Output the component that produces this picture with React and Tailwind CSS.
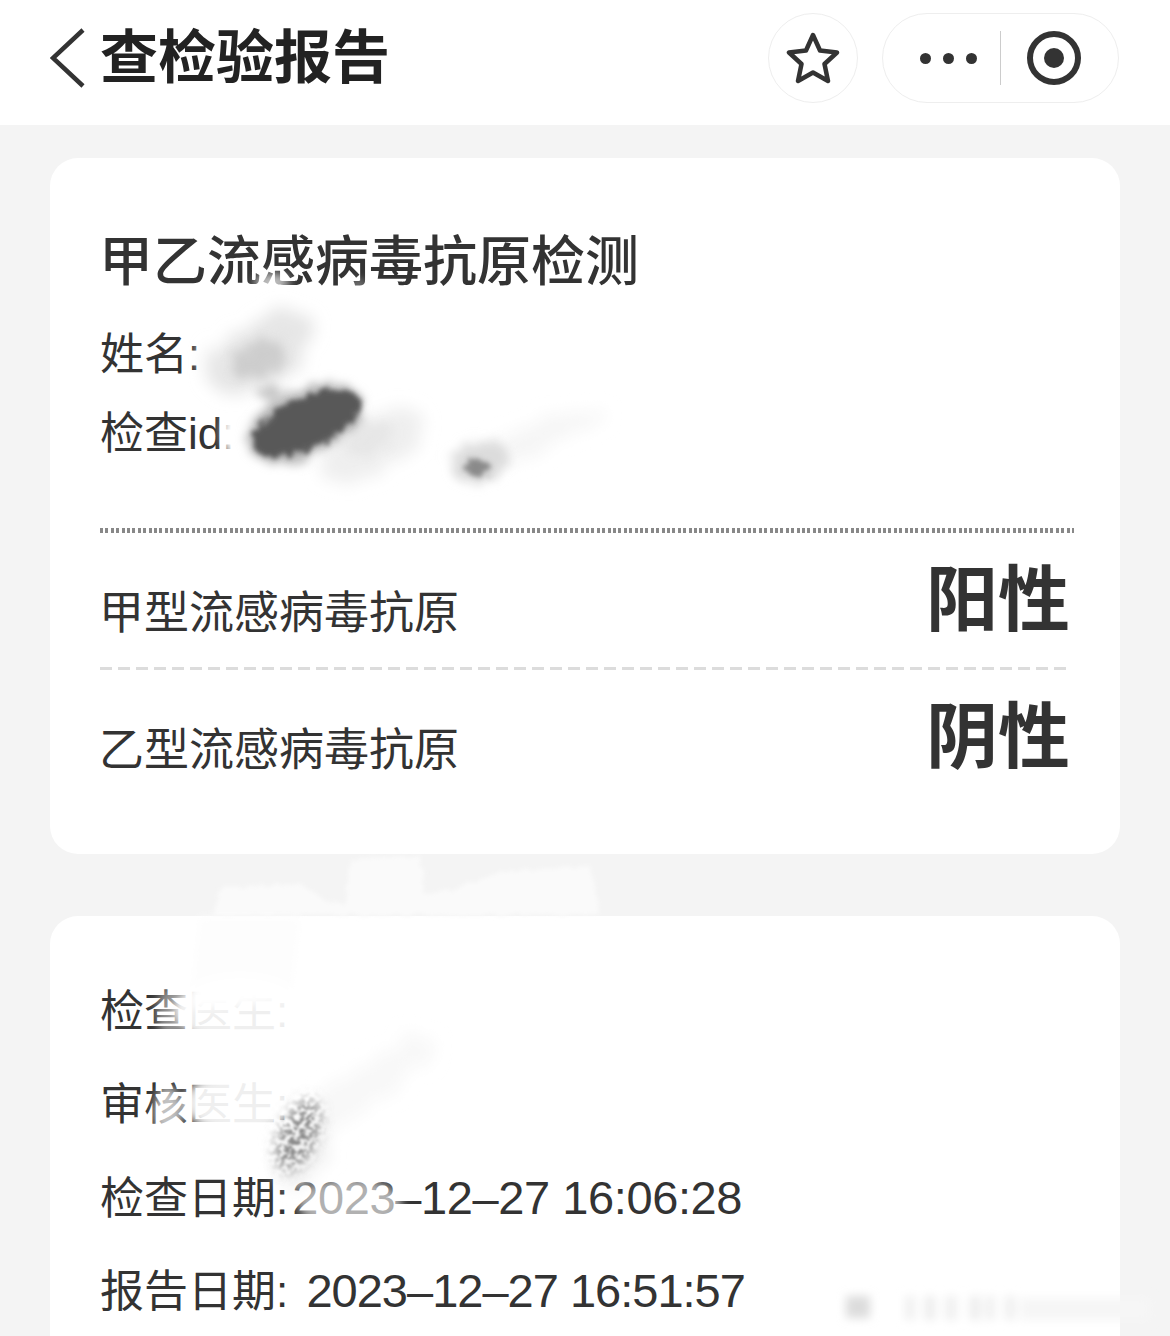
const cjk = "font-['Liberation_Sans','Noto_Sans_CJK_SC',sans-serif]";

function Smudges() {
  return (
    <svg className="absolute left-0 top-0 pointer-events-none" width="1170" height="1336" viewBox="0 0 1170 1336">
      <defs>
        <filter id="rough" x="-40%" y="-40%" width="180%" height="180%">
          <feTurbulence type="fractalNoise" baseFrequency="0.16" numOctaves="3" seed="4" />
          <feDisplacementMap in="SourceGraphic" scale="14" />
          <feGaussianBlur stdDeviation="2.600" />
        </filter>
        <filter id="halo" x="-60%" y="-60%" width="220%" height="220%">
          <feTurbulence type="fractalNoise" baseFrequency="0.12" numOctaves="3" seed="7" />
          <feDisplacementMap in="SourceGraphic" scale="18" />
          <feGaussianBlur stdDeviation="5" />
        </filter>
        <filter id="soft" x="-60%" y="-60%" width="220%" height="220%">
          <feTurbulence type="fractalNoise" baseFrequency="0.05" numOctaves="3" seed="9" />
          <feDisplacementMap in="SourceGraphic" scale="20" />
          <feGaussianBlur stdDeviation="8" />
        </filter>
        <filter id="cloud" x="-30%" y="-30%" width="160%" height="160%">
          <feTurbulence type="fractalNoise" baseFrequency="0.1" numOctaves="2" seed="3" />
          <feDisplacementMap in="SourceGraphic" scale="8" />
          <feGaussianBlur stdDeviation="2" />
        </filter>
        <filter id="speckle" x="-40%" y="-40%" width="180%" height="180%">
          <feGaussianBlur in="SourceGraphic" stdDeviation="7" result="b" />
          <feTurbulence type="fractalNoise" baseFrequency="0.2" numOctaves="2" seed="12" result="n" />
          <feColorMatrix in="n" type="matrix" values="0 0 0 0 0  0 0 0 0 0  0 0 0 0 0  0 0 0 -5 3" result="m" />
          <feComposite in="b" in2="m" operator="in" />
          <feGaussianBlur stdDeviation="1.200" />
        </filter>
        <filter id="blur4" x="-60%" y="-60%" width="220%" height="220%">
          <feGaussianBlur stdDeviation="5" />
        </filter>
      </defs>

      <g filter="url(#cloud)" fill="#fafafa">
        <path d="M212 915 L222 888 L300 884 L325 900 L345 905 L350 860 L420 856 L424 895 L450 890 L500 872 L590 866 L600 915 Z" />
      </g>
      <g filter="url(#blur4)" fill="#fdfdfd">
        <path d="M200 918 L300 918 L290 1000 L190 1010 Z" />
      </g>

      <g filter="url(#blur4)" fill="#fff">
        <ellipse cx="216" cy="353" rx="18" ry="30" />
        <ellipse cx="236" cy="432" rx="14" ry="26" />
        <ellipse cx="272" cy="282" rx="18" ry="9" fillOpacity="0.7" />
        <ellipse cx="358" cy="285" rx="10" ry="5" fillOpacity="0.4" />
        <ellipse cx="240" cy="1010" rx="66" ry="36" fillOpacity="0.92" />
        <ellipse cx="170" cy="1012" rx="14" ry="26" fillOpacity="0.45" />
        <ellipse cx="330" cy="1010" rx="38" ry="36" />
        <ellipse cx="240" cy="1103" rx="56" ry="32" fillOpacity="0.92" />
        <ellipse cx="168" cy="1112" rx="14" ry="26" fillOpacity="0.7" />
        <ellipse cx="350" cy="1204" rx="52" ry="26" fillOpacity="0.62" />
      </g>

      <g filter="url(#soft)">
        <ellipse cx="590" cy="420" rx="18" ry="8" fill="#f8f8f8" transform="rotate(-28 590 420)" />
        <ellipse cx="530" cy="440" rx="66" ry="14" fill="#f6f6f6" transform="rotate(-25 530 440)" />
        <ellipse cx="372" cy="445" rx="58" ry="28" fill="#efefef" transform="rotate(-30 372 445)" />
        <ellipse cx="262" cy="352" rx="60" ry="32" fill="#e6e6e6" transform="rotate(-30 262 352)" />
        <ellipse cx="360" cy="1090" rx="90" ry="20" fill="#f8f8f8" transform="rotate(-35 360 1090)" />
        <ellipse cx="300" cy="1150" rx="24" ry="36" fill="#f0f0f0" transform="rotate(25 300 1150)" />
      </g>

      <g filter="url(#halo)">
        <ellipse cx="258" cy="360" rx="28" ry="18" fill="#cdcdcd" transform="rotate(-25 258 360)" />
        <ellipse cx="268" cy="392" rx="12" ry="7" fill="#c4c4c4" />
        <ellipse cx="305" cy="423" rx="62" ry="33" fill="#b8b8b8" transform="rotate(-24 305 423)" />
        <ellipse cx="480" cy="462" rx="30" ry="20" fill="#dcdcdc" transform="rotate(-20 480 462)" />
        <ellipse cx="370" cy="440" rx="26" ry="12" fill="#e6e6e6" transform="rotate(-30 370 440)" />
      </g>
      <g filter="url(#rough)">
        <ellipse cx="306" cy="423" rx="58" ry="26" fill="#585858" transform="rotate(-24 306 423)" />
        <ellipse cx="478" cy="468" rx="13" ry="9" fill="#8a8a8a" />
      </g>
      <g filter="url(#speckle)">
        <ellipse cx="298" cy="1135" rx="18" ry="38" fill="#8a8a8a" transform="rotate(22 298 1135)" />
      </g>

      <g filter="url(#blur4)">
        <rect x="846" y="1296" width="24" height="22" fill="#dcdcdc" />
        <rect x="905" y="1296" width="10" height="24" fill="#f0f0f0" />
        <rect x="925" y="1296" width="10" height="24" fill="#ececec" />
        <rect x="945" y="1296" width="12" height="24" fill="#f0f0f0" />
        <rect x="970" y="1296" width="10" height="24" fill="#ececec" />
        <rect x="985" y="1296" width="10" height="24" fill="#f0f0f0" />
        <rect x="1005" y="1296" width="10" height="24" fill="#efefef" />
        <rect x="1020" y="1298" width="130" height="22" fill="#f6f6f6" />
      </g>
    </svg>
  );
}

function Row({ label, value }) {
  return (
    <div className="flex justify-between h-[134px]">
      <div className="mt-[51px] -ml-px h-[60px] leading-[60px] text-[45px]">{label}</div>
      <div className="mt-[27px] mr-[4px] h-[80px] leading-[80px] text-[72px] font-bold">{value}</div>
    </div>
  );
}

function Line({ children }) {
  return <div className="h-[60px] leading-[64px] text-[44px] whitespace-nowrap">{children}</div>;
}

export default function App() {
  return (
    <div className={`relative w-[1170px] h-[1336px] overflow-hidden bg-[#f4f4f4] text-[#333] ${cjk}`}>
      <header className="flex items-center justify-between h-[125px] bg-white pb-[9px] pl-[50px] pr-[51px]">
        <div className="flex items-center">
          <svg width="36" height="60" viewBox="0 0 36 60" fill="none" stroke="#333" strokeWidth="4.5">
            <path d="M33 2 L3 30 L33 58" />
          </svg>
          <h1 className="ml-[14px] text-[58px] leading-[70px] font-bold text-[#222]">查检验报告</h1>
        </div>
        <div className="flex items-center gap-[24px]">
          <div className="flex items-center justify-center w-[90px] h-[90px] rounded-full border border-[#eee]">
            <svg width="54" height="52" viewBox="0 0 54 52" fill="none" stroke="#333" strokeWidth="4.5" strokeLinejoin="round">
              <path d="M27 3 L34 18.5 L51 20.5 L38.5 32 L42 49 L27 40.5 L12 49 L15.500 32 L3 20.5 L20 18.500 Z" />
            </svg>
          </div>
          <div className="flex items-center w-[237px] h-[90px] rounded-full border border-[#eee] pl-[37px]">
            <div className="flex gap-[12px]">
              <span className="w-[11px] h-[11px] rounded-full bg-[#333]" />
              <span className="w-[11px] h-[11px] rounded-full bg-[#333]" />
              <span className="w-[11px] h-[11px] rounded-full bg-[#333]" />
            </div>
            <div className="ml-[23px] w-px h-[54px] bg-[#ccc]" />
            <div className="ml-[26px] flex items-center justify-center w-[54px] h-[54px] rounded-full border-[6px] border-[#333]">
              <span className="w-[20px] h-[20px] rounded-full bg-[#333]" />
            </div>
          </div>
        </div>
      </header>

      <main className="px-[50px] pt-[33px]">
        <section className="h-[696px] rounded-[28px] bg-white pt-[74px] pl-[50px] pr-[46px]">
          <h2 className="-ml-px h-[60px] leading-[60px] text-[54px] font-medium whitespace-nowrap">甲乙流感病毒抗原检测</h2>
          <div className="mt-[31px]"><Line>姓名:</Line></div>
          <div className="mt-[19px]"><Line>检查id:</Line></div>
          <div className="mt-[66px] h-[5px] bg-[repeating-linear-gradient(90deg,#888_0_3px,#fff_3px_5.4px)]" />
          <Row label="甲型流感病毒抗原" value="阳性" />
          <div className="h-[3px] mr-[2px] bg-[repeating-linear-gradient(90deg,#dcdcdc_0_12px,#fff_12px_18px)]" />
          <Row label="乙型流感病毒抗原" value="阴性" />
        </section>

        <section className="mt-[62px] h-[500px] rounded-[28px] bg-white pt-[64px] pl-[50px] flex flex-col gap-[33px]">
          <Line>检查医生:</Line>
          <Line>审核医生:</Line>
          <Line>检查日期:<span className="ml-[4px] text-[47px] tracking-[-0.4px]">2023–12–27 16:06:28</span></Line>
          <Line>报告日期: <span className="ml-[6px] text-[47px] tracking-[-1px]">2023–12–27 16:51:57</span></Line>
        </section>
      </main>

      <Smudges />
    </div>
  );
}
